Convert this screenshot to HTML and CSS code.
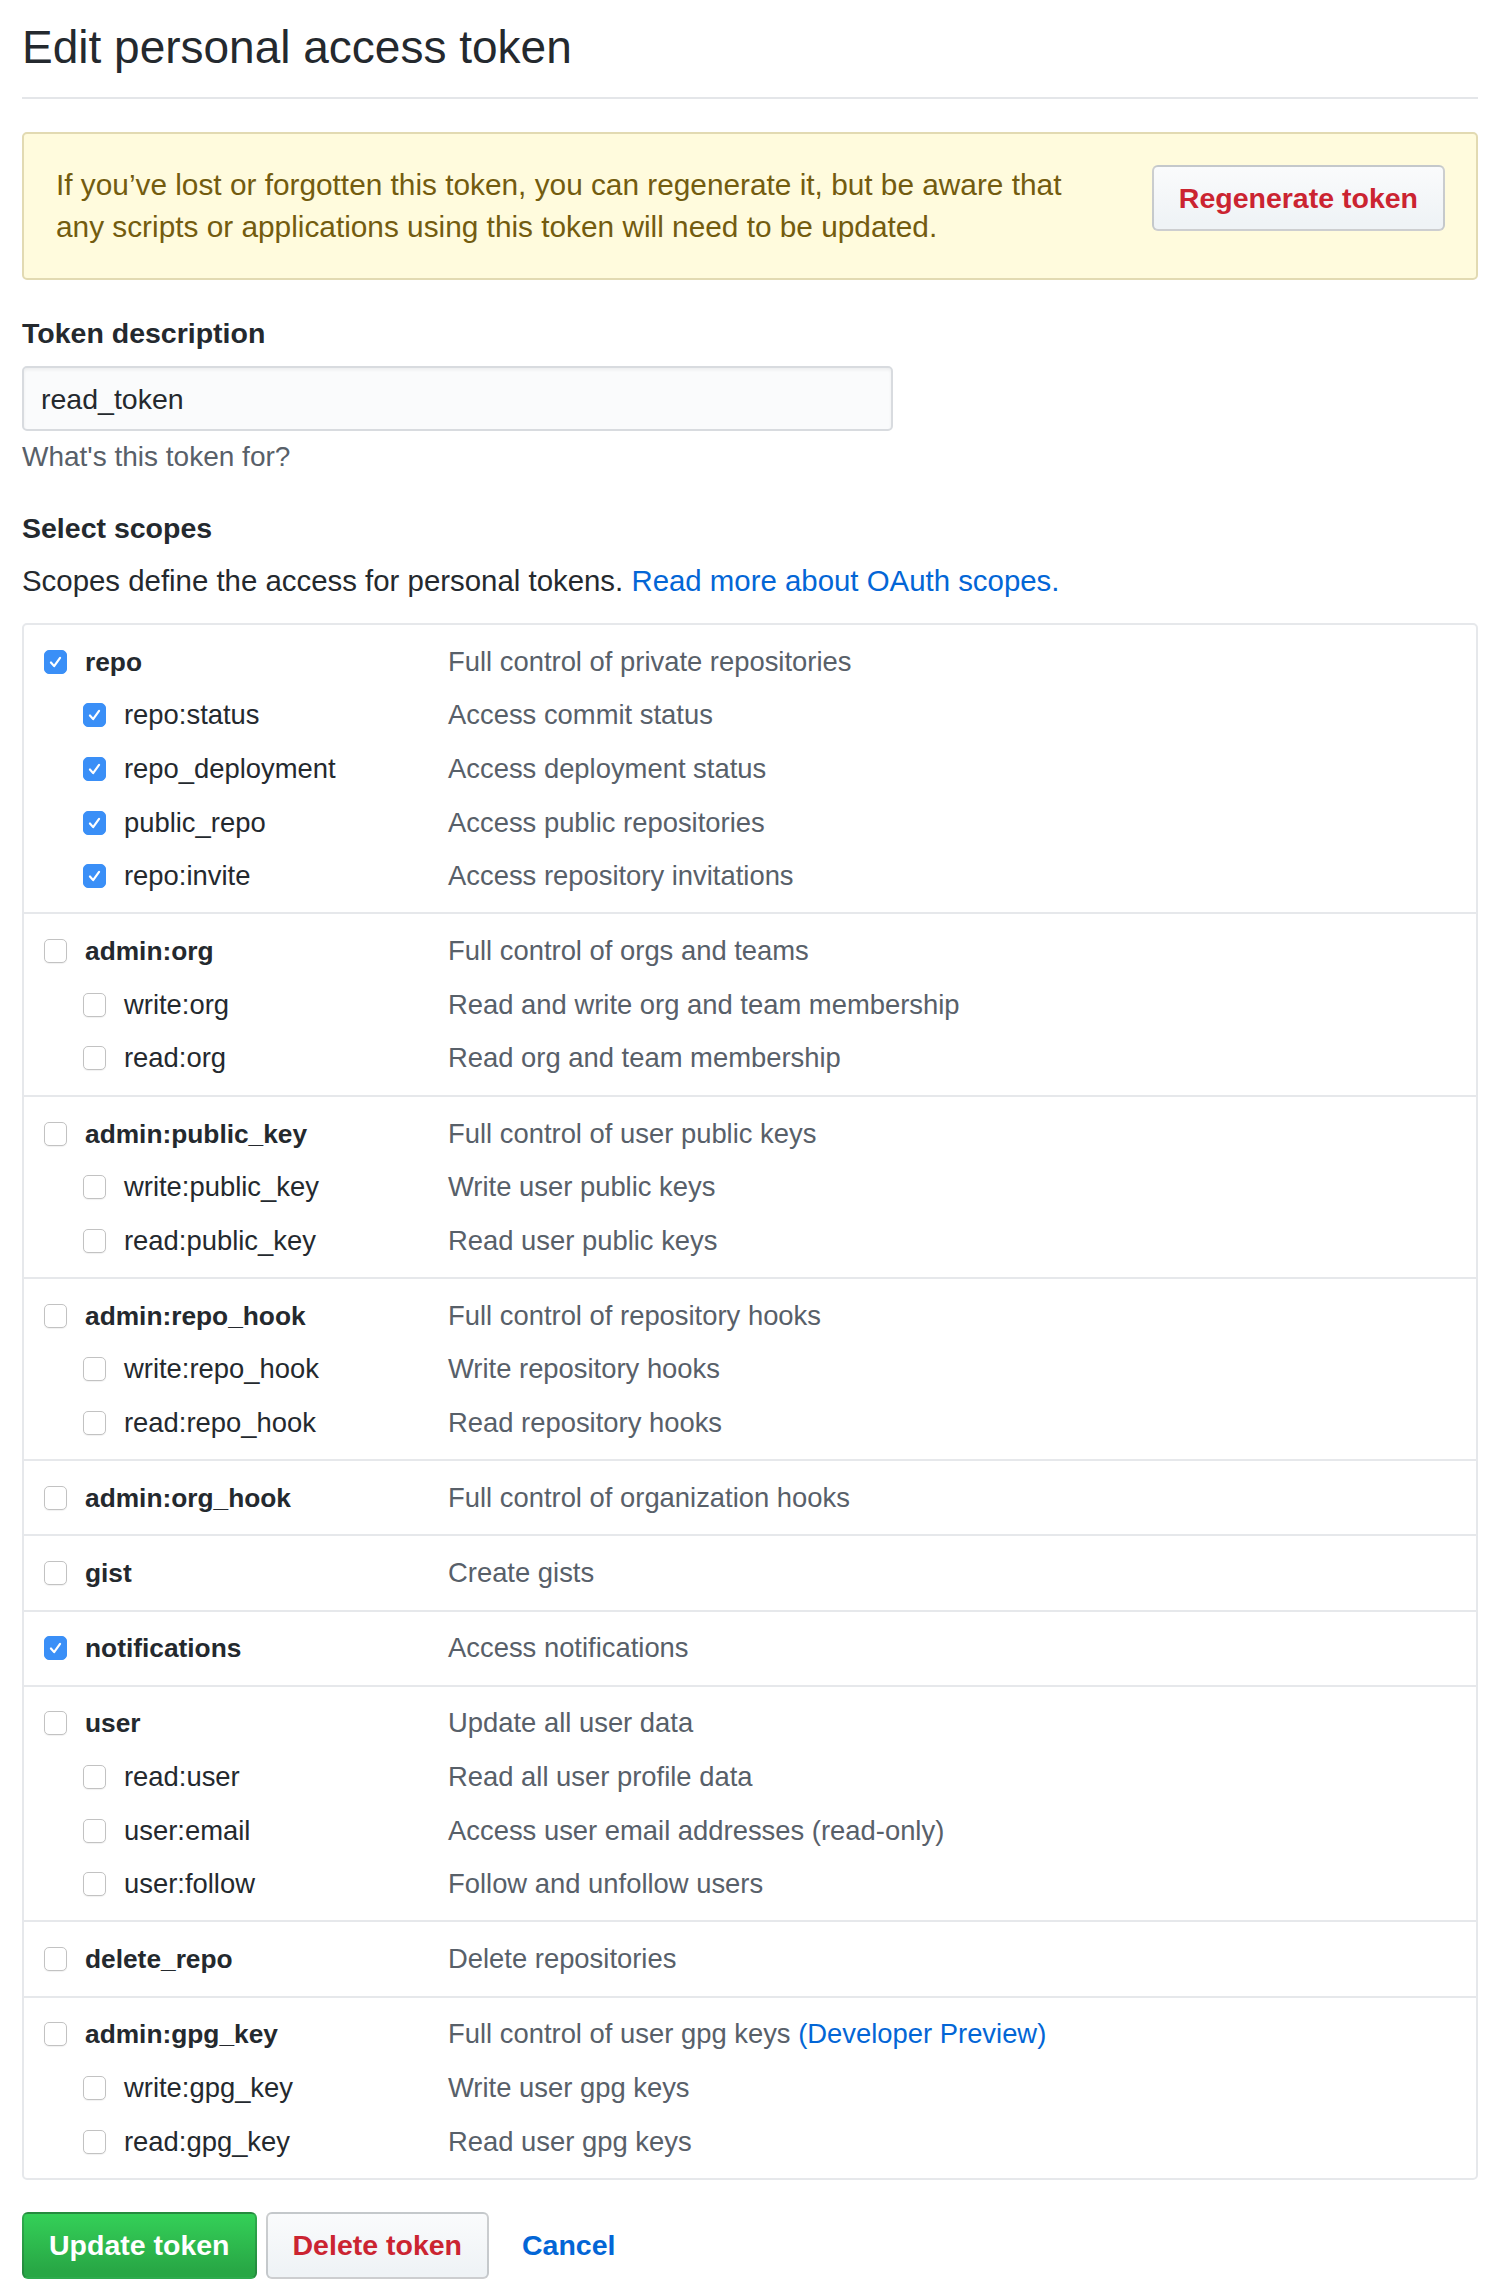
FILE: index.html
```html
<!DOCTYPE html>
<html lang="en">
<head>
<meta charset="utf-8">
<title>Edit personal access token</title>
<link rel="stylesheet" href="styles.css">
</head>
<body>
<div class="page">
  <h2 class="title">Edit personal access token</h2>

  <div class="flash">
    <p class="flash-text">If you’ve lost or forgotten this token, you can regenerate it, but be aware that any scripts or applications using this token will need to be updated.</p>
    <button class="btn btn-danger">Regenerate token</button>
  </div>

  <div class="field-label">Token description</div>
  <div class="input">read_token</div>
  <div class="note">What's this token for?</div>

  <div class="section-title">Select scopes</div>
  <div class="section-desc">Scopes define the access for personal tokens. <a class="link" href="#">Read more about OAuth scopes.</a></div>

  <div class="scopes">
    <div class="group">
      <div class="row top"><div class="scope-name"><span class="cb on"><svg viewBox="0 0 23 24"><polyline points="6.5,12.5 10,16.5 16.5,7.5"/></svg></span><span>repo</span></div><div class="desc">Full control of private repositories</div></div>
      <div class="row sub"><div class="scope-name"><span class="cb on"><svg viewBox="0 0 23 24"><polyline points="6.5,12.5 10,16.5 16.5,7.5"/></svg></span><span>repo:status</span></div><div class="desc">Access commit status</div></div>
      <div class="row sub"><div class="scope-name"><span class="cb on"><svg viewBox="0 0 23 24"><polyline points="6.5,12.5 10,16.5 16.5,7.5"/></svg></span><span>repo_deployment</span></div><div class="desc">Access deployment status</div></div>
      <div class="row sub"><div class="scope-name"><span class="cb on"><svg viewBox="0 0 23 24"><polyline points="6.5,12.5 10,16.5 16.5,7.5"/></svg></span><span>public_repo</span></div><div class="desc">Access public repositories</div></div>
      <div class="row sub"><div class="scope-name"><span class="cb on"><svg viewBox="0 0 23 24"><polyline points="6.5,12.5 10,16.5 16.5,7.5"/></svg></span><span>repo:invite</span></div><div class="desc">Access repository invitations</div></div>
    </div>
    <div class="group">
      <div class="row top"><div class="scope-name"><span class="cb"></span><span>admin:org</span></div><div class="desc">Full control of orgs and teams</div></div>
      <div class="row sub"><div class="scope-name"><span class="cb"></span><span>write:org</span></div><div class="desc">Read and write org and team membership</div></div>
      <div class="row sub"><div class="scope-name"><span class="cb"></span><span>read:org</span></div><div class="desc">Read org and team membership</div></div>
    </div>
    <div class="group">
      <div class="row top"><div class="scope-name"><span class="cb"></span><span>admin:public_key</span></div><div class="desc">Full control of user public keys</div></div>
      <div class="row sub"><div class="scope-name"><span class="cb"></span><span>write:public_key</span></div><div class="desc">Write user public keys</div></div>
      <div class="row sub"><div class="scope-name"><span class="cb"></span><span>read:public_key</span></div><div class="desc">Read user public keys</div></div>
    </div>
    <div class="group">
      <div class="row top"><div class="scope-name"><span class="cb"></span><span>admin:repo_hook</span></div><div class="desc">Full control of repository hooks</div></div>
      <div class="row sub"><div class="scope-name"><span class="cb"></span><span>write:repo_hook</span></div><div class="desc">Write repository hooks</div></div>
      <div class="row sub"><div class="scope-name"><span class="cb"></span><span>read:repo_hook</span></div><div class="desc">Read repository hooks</div></div>
    </div>
    <div class="group">
      <div class="row top"><div class="scope-name"><span class="cb"></span><span>admin:org_hook</span></div><div class="desc">Full control of organization hooks</div></div>
    </div>
    <div class="group">
      <div class="row top"><div class="scope-name"><span class="cb"></span><span>gist</span></div><div class="desc">Create gists</div></div>
    </div>
    <div class="group">
      <div class="row top"><div class="scope-name"><span class="cb on"><svg viewBox="0 0 23 24"><polyline points="6.5,12.5 10,16.5 16.5,7.5"/></svg></span><span>notifications</span></div><div class="desc">Access notifications</div></div>
    </div>
    <div class="group">
      <div class="row top"><div class="scope-name"><span class="cb"></span><span>user</span></div><div class="desc">Update all user data</div></div>
      <div class="row sub"><div class="scope-name"><span class="cb"></span><span>read:user</span></div><div class="desc">Read all user profile data</div></div>
      <div class="row sub"><div class="scope-name"><span class="cb"></span><span>user:email</span></div><div class="desc">Access user email addresses (read-only)</div></div>
      <div class="row sub"><div class="scope-name"><span class="cb"></span><span>user:follow</span></div><div class="desc">Follow and unfollow users</div></div>
    </div>
    <div class="group">
      <div class="row top"><div class="scope-name"><span class="cb"></span><span>delete_repo</span></div><div class="desc">Delete repositories</div></div>
    </div>
    <div class="group">
      <div class="row top"><div class="scope-name"><span class="cb"></span><span>admin:gpg_key</span></div><div class="desc">Full control of user gpg keys <a class="link" href="#">(Developer Preview)</a></div></div>
      <div class="row sub"><div class="scope-name"><span class="cb"></span><span>write:gpg_key</span></div><div class="desc">Write user gpg keys</div></div>
      <div class="row sub"><div class="scope-name"><span class="cb"></span><span>read:gpg_key</span></div><div class="desc">Read user gpg keys</div></div>
    </div>
  </div>

  <div class="actions">
    <button class="btn btn-primary">Update token</button>
    <button class="btn btn-danger">Delete token</button>
    <a class="cancel" href="#">Cancel</a>
  </div>
</div>
</body>
</html>
```

FILE: styles.css
```css
html, body {
  margin: 0;
  padding: 0;
  background: #ffffff;
}

body {
  font-family: "Liberation Sans", Arial, Helvetica, sans-serif;
  font-size: 28.5px;
  line-height: 42px;
  color: #24292e;
}

.page {
  padding: 0 22px;
}

.title {
  margin: 0;
  padding: 19px 0 22px;
  font-size: 46px;
  font-weight: 400;
  line-height: 56px;
  color: #24292e;
  border-bottom: 2px solid #e4e6e9;
}

.flash {
  margin-top: 33px;
  display: flex;
  align-items: flex-start;
  padding: 30px 31px 30px 32px;
  border: 2px solid #e2dab2;
  border-radius: 5px;
  background: #fffbdd;
  color: #735c0f;
}

.flash-text {
  margin: 0 auto 0 0;
  max-width: 1035px;
  font-size: 29.8px;
}

.btn {
  display: inline-flex;
  align-items: center;
  justify-content: center;
  box-sizing: border-box;
  height: 67px;
  padding: 0 25px;
  font-family: inherit;
  font-size: 28.5px;
  font-weight: 700;
  line-height: 42px;
  border: 2px solid rgba(27, 31, 35, 0.2);
  border-radius: 6px;
  cursor: pointer;
  white-space: nowrap;
}

.btn-danger {
  color: #cb2431;
  background-color: #eff3f6;
  background-image: linear-gradient(-180deg, #fafbfc 0%, #eff3f6 90%);
}

.flash .btn {
  height: 66px;
  margin-top: 1px;
}

.btn-primary {
  color: #ffffff;
  background-color: #28a745;
  background-image: linear-gradient(-180deg, #34d058 0%, #28a745 90%);
}

.field-label {
  margin-top: 32px;
  font-weight: 700;
}

.input {
  margin-top: 12px;
  box-sizing: border-box;
  width: 871px;
  height: 65px;
  display: flex;
  align-items: center;
  padding: 0 17px;
  border: 2px solid #d8dbdf;
  border-radius: 5px;
  background: #fafbfc;
  box-shadow: inset 0 2px 3px rgba(27, 31, 35, 0.06);
}

.note {
  margin-top: 5px;
  font-size: 28px;
  color: #586069;
}

.section-title {
  margin-top: 29px;
  font-weight: 700;
}

.section-desc {
  margin-top: 11px;
  font-size: 29.4px;
}

.link {
  color: #0366d6;
  text-decoration: none;
}

.scopes {
  margin-top: 21px;
  border: 2px solid #e6e8eb;
  border-radius: 5px;
  font-size: 27.4px;
}

.group {
  padding: 10px 0 9.5px;
}

.group + .group {
  border-top: 2px solid #e6e8eb;
}

.row {
  display: grid;
  grid-template-columns: 424px 1fr;
  align-items: center;
  height: 53.6px;
}

.scope-name {
  display: flex;
  align-items: center;
  gap: 18px;
  padding-left: 20px;
}

.row.top .scope-name {
  font-weight: 700;
  font-size: 26.3px;
}

.row.sub .scope-name {
  padding-left: 59px;
}

.desc {
  color: #586069;
}

.cb {
  flex: none;
  box-sizing: border-box;
  width: 23px;
  height: 24px;
  border: 1.5px solid #c2c2c2;
  border-radius: 5px;
  background: #ffffff;
  box-shadow: 0 1px 1px rgba(0, 0, 0, 0.06);
  display: flex;
}

.cb.on {
  border-color: #3a8ff7;
  background: #3a8ff7;
  box-shadow: none;
}

.cb svg {
  width: 100%;
  height: 100%;
}

.cb svg polyline {
  fill: none;
  stroke: #ffffff;
  stroke-width: 2.4;
  stroke-linecap: round;
  stroke-linejoin: round;
}

.actions {
  display: flex;
  align-items: center;
  gap: 9px;
  margin-top: 32px;
}

.cancel {
  margin-left: 24px;
  color: #0366d6;
  font-weight: 700;
  text-decoration: none;
}
```
